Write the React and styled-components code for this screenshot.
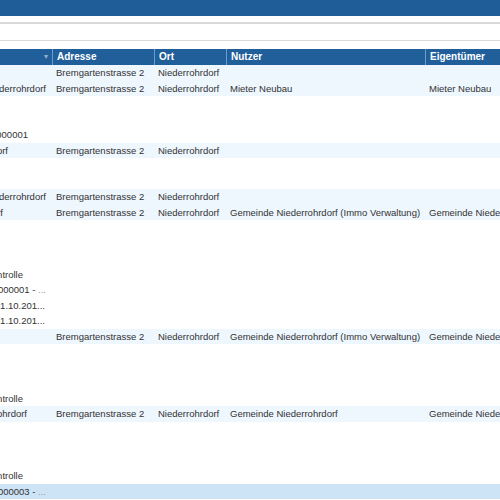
import React from 'react'
import styled, { createGlobalStyle } from 'styled-components';

const GlobalStyle = createGlobalStyle`
  html, body {
    margin: 0;
    padding: 0;
    background: #ffffff;
    overflow: hidden;
  }
  body {
    font-family: "Liberation Sans", Arial, sans-serif;
    color: #333333;
  }
`;

const columns = [
  { key: 'tree', label: '', width: 52 },
  { key: 'adresse', label: 'Adresse', width: 102 },
  { key: 'ort', label: 'Ort', width: 72 },
  { key: 'nutzer', label: 'Nutzer', width: 199 },
  { key: 'eigentuemer', label: 'Eigentümer', width: 160 },
];

const ADR = 'Bremgartenstrasse 2';
const ORT = 'Niederrohrdorf';
const GEM = 'Gemeinde Niederrohrdorf';
const IMMO = 'Gemeinde Niederrohrdorf (Immo Verwaltung)';

// tree: label of the tree column, pad: space to the right of it (tree indent is off-screen)
const rows = [
  { band: true, adresse: ADR, ort: ORT },
  { band: true, tree: GEM, pad: 6, adresse: ADR, ort: ORT, nutzer: 'Mieter Neubau', eigentuemer: 'Mieter Neubau' },
  {},
  {},
  { tree: 'Liegenschaft 000001', pad: 24 },
  { band: true, tree: ORT, pad: 44, adresse: ADR, ort: ORT },
  {},
  {},
  { band: true, tree: GEM, pad: 6, adresse: ADR, ort: ORT },
  { band: true, tree: ORT, pad: 49, adresse: ADR, ort: ORT, nutzer: IMMO, eigentuemer: GEM },
  {},
  {},
  {},
  { tree: 'Kontrolle', pad: 29 },
  { tree: 'Objekt 000001 - ', more: true, pad: 6 },
  { tree: 'Gültig ab 01.10.201...', pad: 7 },
  { tree: 'Gültig bis 31.10.201...', pad: 7 },
  { band: true, adresse: ADR, ort: ORT, nutzer: IMMO, eigentuemer: GEM },
  {},
  {},
  {},
  { tree: 'Kontrolle', pad: 29 },
  { band: true, tree: 'Niederrohrdorf', pad: 25, adresse: ADR, ort: ORT, nutzer: GEM, eigentuemer: GEM },
  {},
  {},
  {},
  { tree: 'Kontrolle', pad: 29 },
  { selected: true, tree: 'Objekt 000003 - ', more: true, pad: 6 },
];

export default function App() {
  return (
    <>
      <GlobalStyle />
      <Page>
        <TitleBar />
        <SearchStrip />
        <Grid>
          <HeaderRow>
            {columns.map((col, index) => (
              <HeaderCell key={col.key} $width={col.width} $first={index === 0}>
                {col.label}
                {index === 0 && <SortArrow>▾</SortArrow>}
              </HeaderCell>
            ))}
          </HeaderRow>
          {rows.map((row, index) => (
            <Row key={index} $band={row.band} $selected={row.selected}>
              <TreeCell $width={columns[0].width} $pad={row.pad || 0}>
                {row.tree && (
                  <span>
                    {row.tree}
                    {row.more && <Muted>...</Muted>}
                  </span>
                )}
              </TreeCell>
              {columns.slice(1).map((col) => (
                <Cell key={col.key} $width={col.width}>{row[col.key]}</Cell>
              ))}
            </Row>
          ))}
        </Grid>
      </Page>
    </>
  )
};

const Page = styled.div`
  width: 500px;
  height: 500px;
  overflow: hidden;
  display: flex;
  flex-direction: column;
`;

const TitleBar = styled.div`
  height: 16px;
  flex-shrink: 0;
  background-color: #1f5d98;
`;

const SearchStrip = styled.div`
  height: 16px;
  flex-shrink: 0;
  margin: 6px 0 8px;
  border-top: 2px solid #d9d9d9;
  border-bottom: 1px solid #d9d9d9;
  background: #ffffff;
`;

const Grid = styled.div`
  display: flex;
  flex-direction: column;
  width: 585px;
`;

const HeaderRow = styled.div`
  display: flex;
  height: 16px;
  background-color: #215f9b;
`;

const HeaderCell = styled.div`
  position: relative;
  width: ${(p) => p.$width}px;
  flex-shrink: 0;
  box-sizing: border-box;
  padding-left: 4px;
  border-left: ${(p) => (p.$first ? 'none' : '1px solid #6d9bcb')};
  color: #ffffff;
  font-weight: bold;
  font-size: 10px;
  line-height: 16px;
  white-space: nowrap;
  overflow: hidden;
`;

const SortArrow = styled.span`
  position: absolute;
  right: 4px;
  top: 0;
  font-size: 8px;
  color: #8eb2d6;
  font-weight: normal;
`;

const Row = styled.div`
  display: flex;
  height: 15.5px;
  background-color: ${(p) => (p.$selected ? '#cde3f6' : p.$band ? '#eef6fe' : '#ffffff')};
`;

const Cell = styled.div`
  width: ${(p) => p.$width}px;
  flex-shrink: 0;
  box-sizing: border-box;
  padding-left: 4px;
  font-size: 9.5px;
  line-height: 15.5px;
  white-space: nowrap;
  overflow: hidden;
  color: #333333;
`;

const TreeCell = styled(Cell)`
  display: flex;
  justify-content: flex-end;
  padding-left: 0;
  padding-right: ${(p) => p.$pad}px;
  span {
    flex-shrink: 0;
  }
`;

const Muted = styled.span`
  color: #9a9a9a;
`;
